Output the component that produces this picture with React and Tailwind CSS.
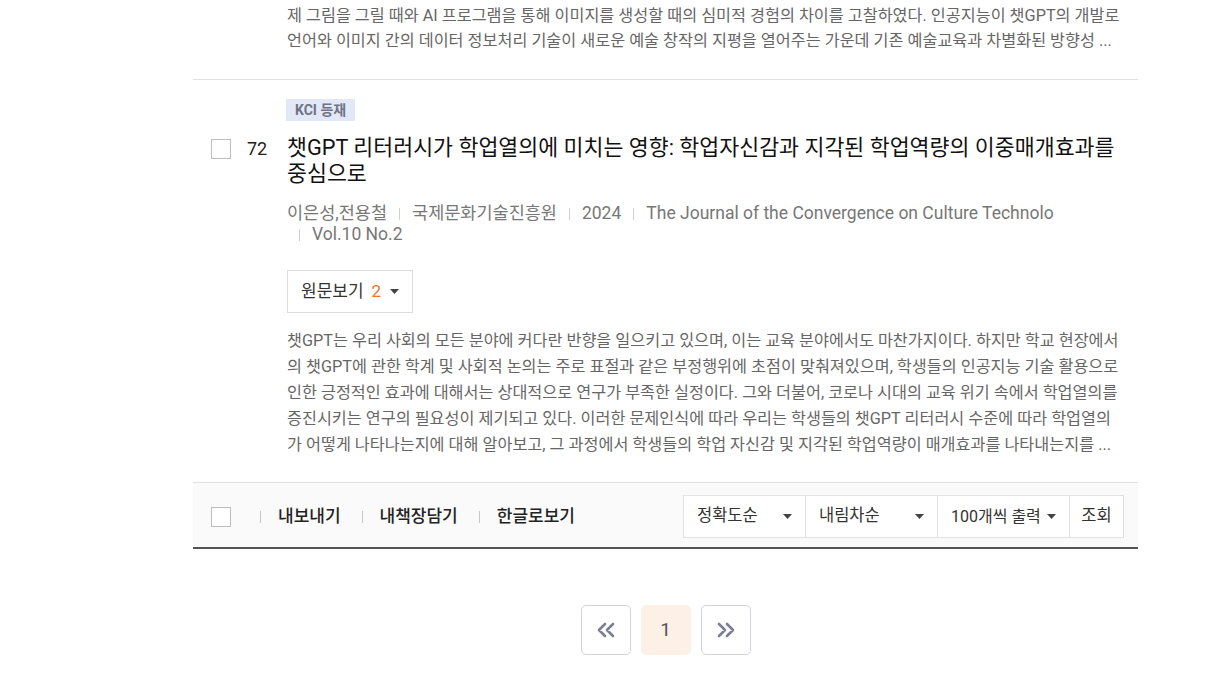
import { useState } from "react";

const topAbstract = [
  "제 그림을 그릴 때와 AI 프로그램을 통해 이미지를 생성할 때의 심미적 경험의 차이를 고찰하였다. 인공지능이 챗GPT의 개발로",
  "언어와 이미지 간의 데이터 정보처리 기술이 새로운 예술 창작의 지평을 열어주는 가운데 기존 예술교육과 차별화된 방향성 ...",
];

const abstract = [
  "챗GPT는 우리 사회의 모든 분야에 커다란 반향을 일으키고 있으며, 이는 교육 분야에서도 마찬가지이다. 하지만 학교 현장에서",
  "의 챗GPT에 관한 학계 및 사회적 논의는 주로 표절과 같은 부정행위에 초점이 맞춰져있으며, 학생들의 인공지능 기술 활용으로",
  "인한 긍정적인 효과에 대해서는 상대적으로 연구가 부족한 실정이다. 그와 더불어, 코로나 시대의 교육 위기 속에서 학업열의를",
  "증진시키는 연구의 필요성이 제기되고 있다. 이러한 문제인식에 따라 우리는 학생들의 챗GPT 리터러시 수준에 따라 학업열의",
  "가 어떻게 나타나는지에 대해 알아보고, 그 과정에서 학생들의 학업 자신감 및 지각된 학업역량이 매개효과를 나타내는지를 ...",
];

const meta = ["국제문화기술진흥원", "2024", "The Journal of the Convergence on Culture Technolo", "Vol.10 No.2"];

function Checkbox() {
  return <span className="block w-5 h-5 border border-[#bdbdbd] bg-white shrink-0" />;
}

function Caret() {
  return (
    <svg width="9" height="5" viewBox="0 0 9 5" className="shrink-0">
      <path d="M0 0h9L4.5 5z" fill="#444" />
    </svg>
  );
}

function Select({ label, width, small }) {
  return (
    <div className={`flex items-center justify-between h-full pl-[13px] pr-[13px] border-r border-[#e2e2e2] ${width}`}>
      <span className={small ? "text-[16px]" : ""}>{label}</span>
      <Caret />
    </div>
  );
}

export default function App() {
  const [page] = useState(1);

  return (
    <div
      className="min-h-[697px] bg-white text-[#333]"
      style={{ fontFamily: "Roboto, 'Noto Sans CJK KR', 'Noto Sans', sans-serif" }}
    >
      <div className="ml-[193px] w-[945px]">
        {/* previous item tail */}
        <div className="pl-[94px] pt-[3px] pb-[26px] border-b border-[#e0e0e0] text-[16.25px] leading-[25px] text-[#666]">
          {topAbstract.map((l) => (
            <div key={l} className="whitespace-nowrap">{l}</div>
          ))}
        </div>

        {/* item 72 */}
        <div className="pt-[18px] pb-[24px]">
          <div className="pl-[93px]">
            <span className="inline-block h-[22px] px-[9px] bg-[#e3e8f8] text-[14px] leading-[22px] font-bold text-[#6f7384]">
              KCI 등재
            </span>
          </div>
          <div className="flex mt-[13px]">
            <div className="flex items-start shrink-0 w-[94px] pt-[4px] pl-[18px]">
              <Checkbox />
              <span className="ml-4 text-[18px] leading-[20px] text-[#222]">72</span>
            </div>
            <div className="flex-1 min-w-0 pr-[20px]">
              <h3 className="text-[21.7px] leading-[26px] text-[#111]">
                챗GPT 리터러시가 학업열의에 미치는 영향: 학업자신감과 지각된 학업역량의 이중매개효과를 중심으로
              </h3>
              <div className="flex flex-wrap mt-[16px] text-[17.5px] leading-[21px] text-[#777]">
                <span>이은성,전용철</span>
                {meta.map((m) => (
                  <span key={m} className="flex items-center">
                    <span className="mx-[12px] w-px h-[12px] bg-[#d0d0d0]" />
                    {m}
                  </span>
                ))}
              </div>
              <button className="flex items-center mt-[25px] h-[43px] px-[13px] border border-[#dcdcdc] bg-white text-[17px] text-[#333]">
                원문보기
                <span className="ml-[8px] text-[#e8782a]">2</span>
                <span className="ml-[9px]">
                  <Caret />
                </span>
              </button>
              <div className="mt-[15px] text-[16.25px] leading-[26px] text-[#666]">
                {abstract.map((l) => (
                  <div key={l} className="whitespace-nowrap">{l}</div>
                ))}
              </div>
            </div>
          </div>
        </div>

        {/* toolbar */}
        <div className="flex items-center justify-between h-[67px] pt-[3px] pl-[18px] pr-[14px] bg-[#fafafa] border-t border-[#e0e0e0] border-b-2 border-b-[#555]">
          <div className="flex items-center text-[17px] font-medium text-[#222]">
            <Checkbox />
            {["내보내기", "내책장담기", "한글로보기"].map((t, i) => (
              <span key={t} className="flex items-center">
                <span className={`${i === 0 ? "ml-[29px]" : "ml-[21px]"} mr-[17px] w-px h-[12px] bg-[#c8c8c8]`} />
                {t}
              </span>
            ))}
          </div>
          <div className="flex items-center h-[43px] bg-white border border-[#e2e2e2] border-r-[#dcdcdc] text-[16.5px] text-[#333]">
            <Select label="정확도순" width="w-[122px]" />
            <Select label="내림차순" width="w-[132px]" />
            <Select label="100개씩 출력" width="w-[132px]" small />
            <button className="w-[53px] h-full text-center">조회</button>
          </div>
        </div>

        {/* pagination */}
        <div className="flex justify-center gap-[10px] mt-[56px]">
          <button className="w-[50px] h-[50px] rounded-[5px] border border-[#d2d3da] bg-white flex items-center justify-center">
            <svg width="20" height="16" viewBox="0 0 20 16" fill="none" stroke="#7b7f93" strokeWidth="2.6" strokeLinecap="round" strokeLinejoin="round">
              <path d="M9 2L3 8l6 6M17 2l-6 6 6 6" />
            </svg>
          </button>
          <button className="w-[50px] h-[50px] rounded-[5px] bg-[#fdf0e7] text-[19px] text-[#555]">{page}</button>
          <button className="w-[50px] h-[50px] rounded-[5px] border border-[#d2d3da] bg-white flex items-center justify-center">
            <svg width="20" height="16" viewBox="0 0 20 16" fill="none" stroke="#7b7f93" strokeWidth="2.6" strokeLinecap="round" strokeLinejoin="round">
              <path d="M3 2l6 6-6 6M11 2l6 6-6 6" />
            </svg>
          </button>
        </div>
      </div>
    </div>
  );
}
